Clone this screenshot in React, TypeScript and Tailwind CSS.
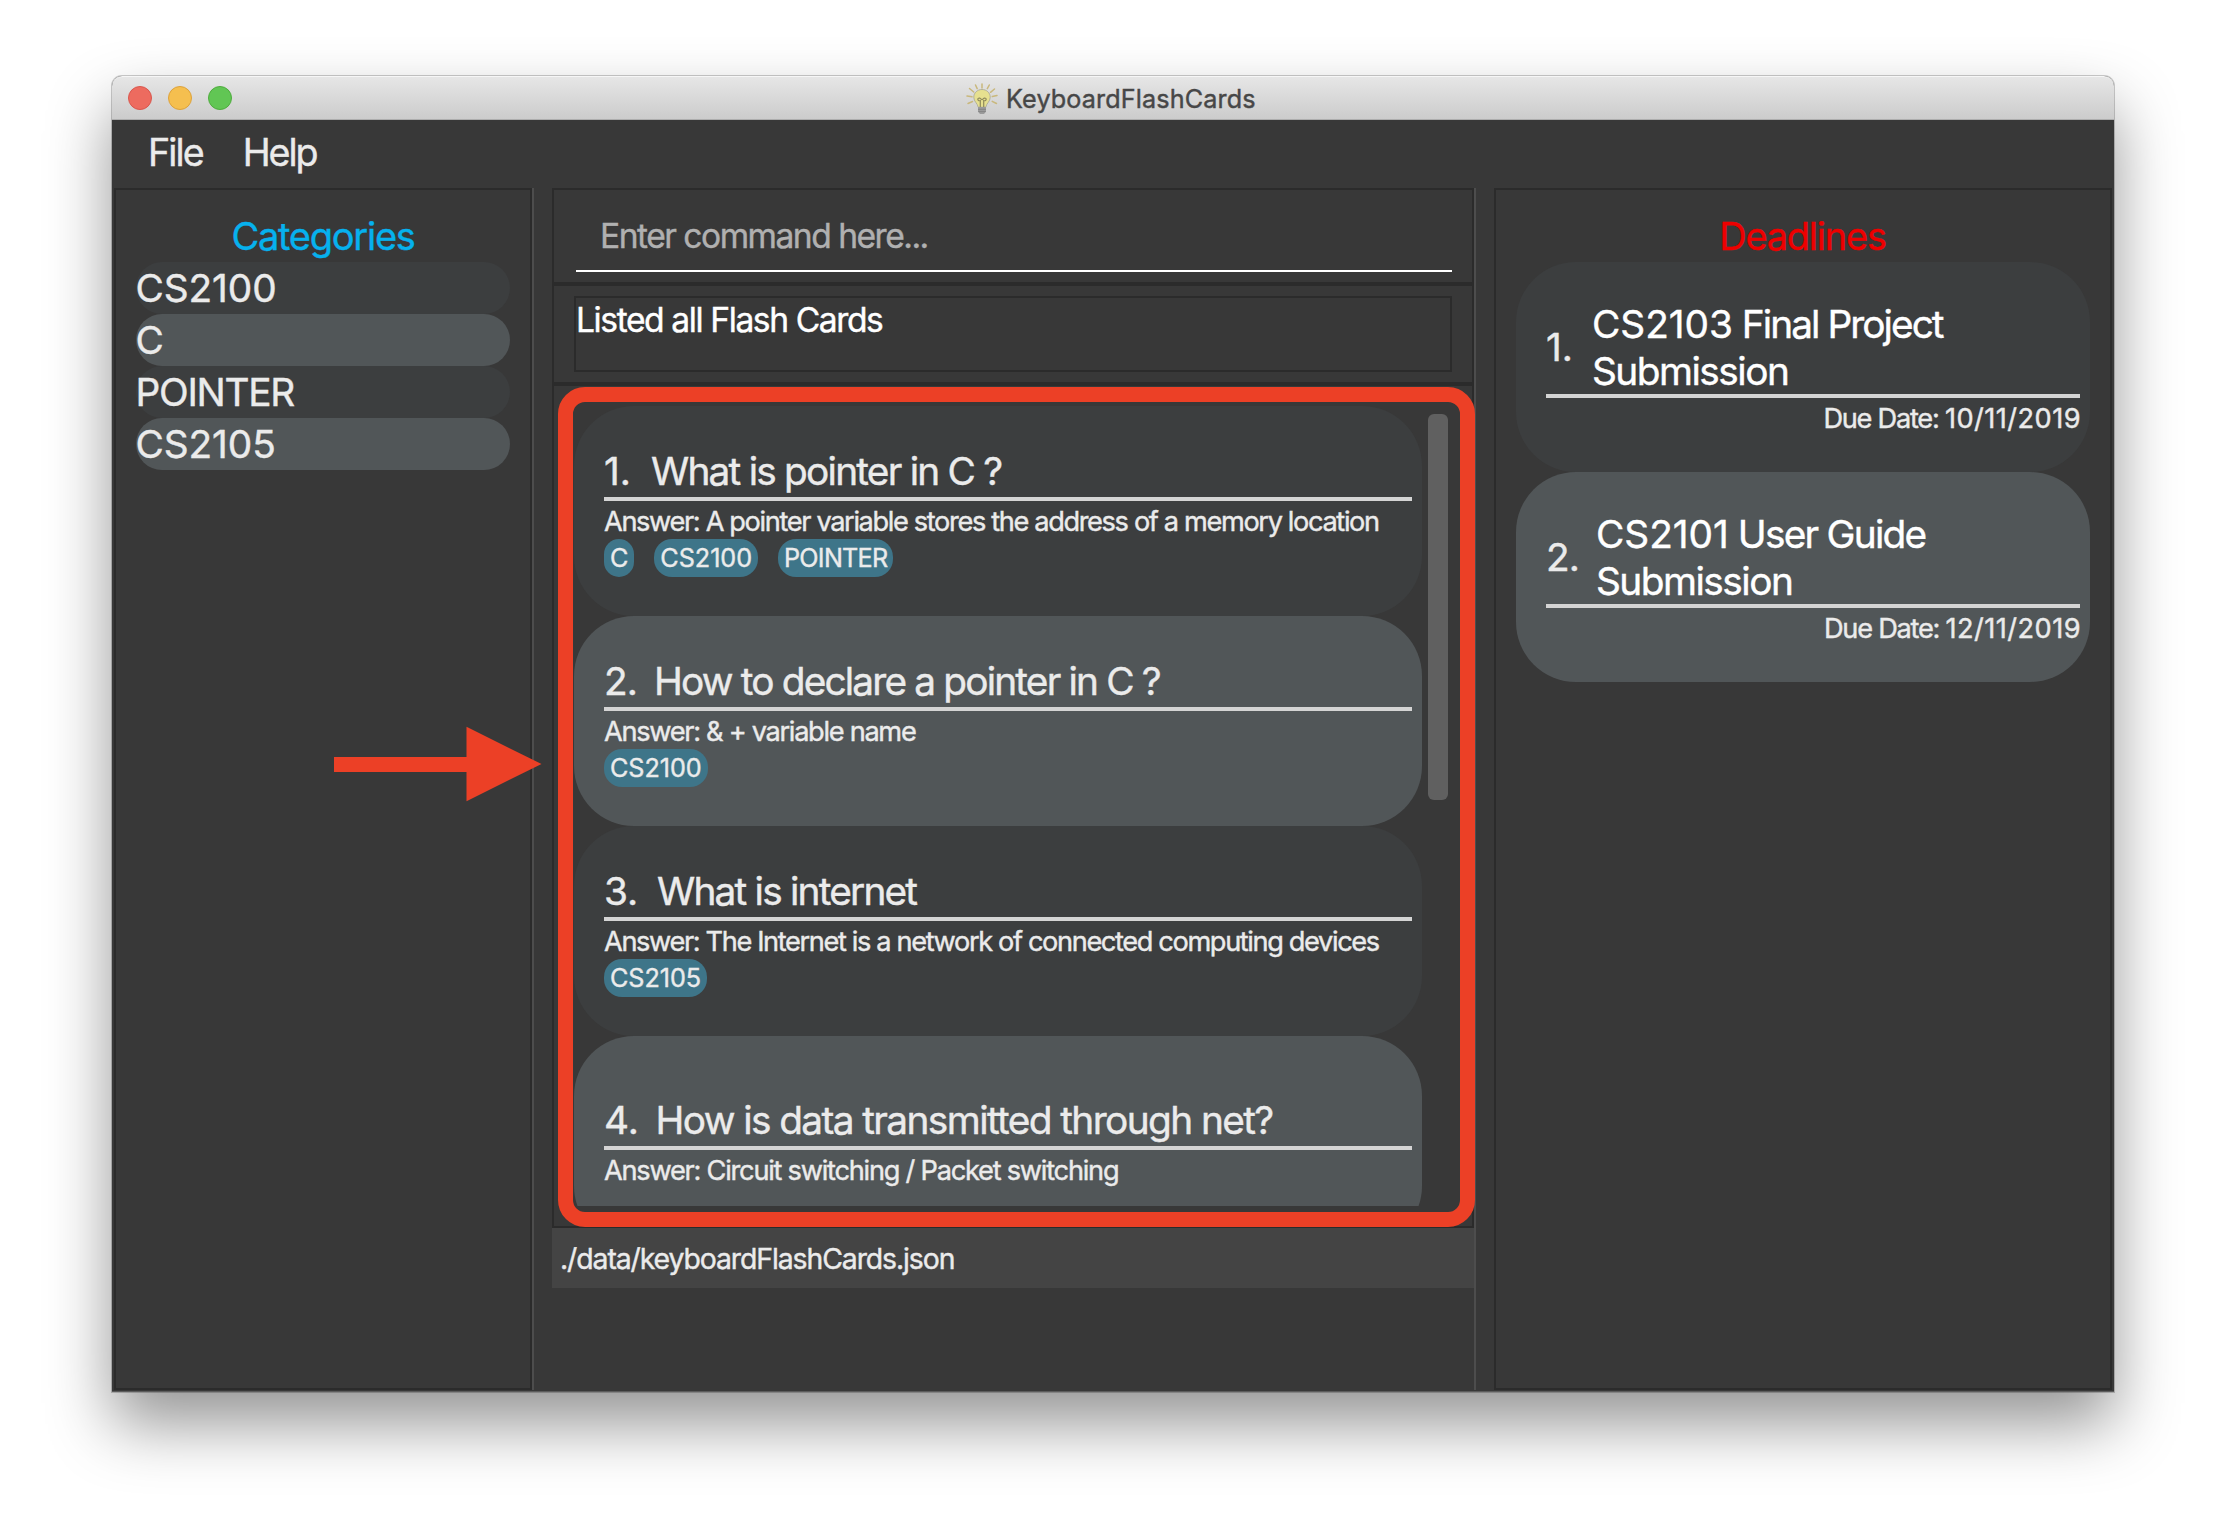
import React from 'react';

type Card = {
  no: string;
  question: string;
  answer: string;
  tags: string[];
  noWidth: string;
  tracking: string;
  answerTracking: string;
  top: string;
};

const categories = ['CS2100', 'C', 'POINTER', 'CS2105'];

const cards: Card[] = [
  {
    no: '1.',
    question: 'What is pointer in C ?',
    answer: 'A pointer variable stores the address of a memory location',
    tags: ['C', 'CS2100', 'POINTER'],
    noWidth: 'w-[47px]',
    tracking: 'tracking-[-1.78px]',
    answerTracking: 'tracking-[-1.36px]',
    top: 'h-[210px] pt-[40px]',
  },
  {
    no: '2.',
    question: 'How to declare a pointer in C ?',
    answer: '& + variable name',
    tags: ['CS2100'],
    noWidth: 'w-[50px] tracking-[-1px]',
    tracking: 'tracking-[-1.83px]',
    answerTracking: 'tracking-[-1.3px]',
    top: 'h-[210px] pt-[40px]',
  },
  {
    no: '3.',
    question: 'What is internet',
    answer: 'The Internet is a network of connected computing devices',
    tags: ['CS2105'],
    noWidth: 'w-[53px]',
    tracking: 'tracking-[-1.8px]',
    answerTracking: 'tracking-[-1.37px]',
    top: 'h-[210px] pt-[40px]',
  },
  {
    no: '4.',
    question: 'How is data transmitted through net?',
    answer: 'Circuit switching / Packet switching',
    tags: [],
    noWidth: 'w-[51.5px]',
    tracking: 'tracking-[-1.6px]',
    answerTracking: 'tracking-[-1.24px]',
    top: 'h-[210px] pt-[59px]',
  },
];

const deadlines = [
  {
    no: '1.',
    code: 'CS2103',
    first: ' Final Project',
    date: '10/11/2019',
    noWidth: 'w-[46px]',
    tracking: 'tracking-[-1.95px]',
  },
  {
    no: '2.',
    code: 'CS2101',
    first: ' User Guide',
    date: '12/11/2019',
    noWidth: 'w-[50px] tracking-[-1px]',
    tracking: 'tracking-[-1.75px]',
  },
];

function stripe(i: number) {
  return i % 2 === 0 ? 'bg-[#3c3e3f]' : 'bg-[#515658]';
}

function BulbIcon() {
  return (
    <svg viewBox="0 0 32 32" className="h-8 w-8" fill="none">
      <g stroke="#c9b87c" strokeWidth="1.5" strokeLinecap="round">
        <path d="M16 1v4M9.5 2l1.7 3.6M23.300 2l-2 3.700M3.500 5.500l4.200 3.500M28.500 6l-4 3.300M1 13l5 .8M31 12.500l-4.700 1M2 20.500l4.500-2M30.500 20.500l-4.300-2.200" />
      </g>
      <path
        d="M16 6.500c-4.700 0-8.200 3.400-8.200 7.700 0 4.600 3.700 5.800 4.400 10h7.600c.7-4.200 4.400-5.400 4.400-10 0-4.300-3.500-7.700-8.200-7.700z"
        fill="#e6e08f"
        stroke="#b3b19b"
        strokeWidth="1"
      />
      <path
        d="M14.300 24v-6.300c-3.200.6-3.200-3.200-.6-2.600 1.300.4 1.500 1.600 2.300 1.600s1-1.200 2.300-1.600c2.600-.6 2.600 3.200-.6 2.600V24"
        stroke="#8f8a5c"
        strokeWidth="1.200"
      />
      <path d="M12 24h8v4.500l-2 2.500h-4l-2-2.500z" fill="#9b9b9b" />
      <path d="M12 26.300h8M12.300 28.600h7.400" stroke="#7f7f7f" strokeWidth=".8" />
    </svg>
  );
}

function TitleBar() {
  return (
    <div className="relative flex h-[44px] items-center rounded-t-[10px] border-t border-b border-t-[#f6f6f6] border-b-[#adadad] bg-linear-to-b from-[#e6e6e6] to-[#cccccc] pl-4">
      <div className="flex gap-4">
        <span className="h-6 w-6 rounded-full border border-[#d9574e] bg-[#ed6b5f]" />
        <span className="h-6 w-6 rounded-full border border-[#dda23c] bg-[#f5bf4f]" />
        <span className="h-6 w-6 rounded-full border border-[#4fac3e] bg-[#61c654]" />
      </div>
      <div className="ml-[734px] flex items-center gap-2 pt-[2px]">
        <BulbIcon />
        <span className="text-[25.2px] leading-[42px] tracking-[0.13px] whitespace-pre text-[#474747]">
          KeyboardFlashCards
        </span>
      </div>
    </div>
  );
}

function MenuBar() {
  return (
    <div className="flex h-[68px] gap-[40px] pl-[36px] text-[37.6px] leading-[66px] text-[#ebebeb]">
      <span className="tracking-[-1.9px]">File</span>
      <span className="tracking-[-2.05px]">Help</span>
    </div>
  );
}

function CategoriesPane() {
  return (
    <div className="h-[1202px] w-[418px] border-2 border-[#2b2b2b] pt-5 pr-5 pl-5">
      <h2 className="text-center text-[38px] leading-[52px] tracking-[-1.25px] text-[#06b1ee]">Categories</h2>
      {categories.map((c, i) => (
        <div
          key={c}
          className={`${stripe(i)} h-[52px] w-[374px] rounded-[26px] text-[38.8px] leading-[52px] text-[#ebebeb]`}
        >
          <span className={c === 'POINTER' ? '-ml-[0.5px] tracking-[-1.28px]' : '-ml-[0.5px] tracking-[-0.1px]'}>{c}</span>
        </div>
      ))}
    </div>
  );
}

function FlashCard({ card, index }: { card: Card; index: number }) {
  return (
    <div className={`${stripe(index)} ${card.top} w-[848px] shrink-0 rounded-[60px] pr-[10px] pl-[30px] text-[#ebebeb]`}>
      <div className="flex h-[51px] text-[38.8px] leading-[50px] whitespace-pre">
        <span className={card.noWidth}>{card.no}</span>
        <span className={card.tracking}>{card.question}</span>
      </div>
      <div className="h-1 bg-[#d4d4d4]" />
      <div className={`${card.answerTracking} h-[38px] text-[27.2px] leading-[42px] whitespace-pre`}>
        Answer: {card.answer}
      </div>
      <div className="flex gap-5">
        {card.tags.map((t) => (
          <span
            key={t}
            className={`${t === 'POINTER' ? 'tracking-[-0.75px]' : 'tracking-[-0.05px]'} h-[38px] rounded-[18px] bg-[#3e7589] px-[6px] text-[25.2px] leading-[38px]`}
          >
            {t}
          </span>
        ))}
      </div>
    </div>
  );
}

function MainPane() {
  return (
    <div className="w-[922px]">
      <div className="h-[96px] border-2 border-[#2b2b2b] pt-[11px] pr-5 pl-[22px]">
        <div className="h-[71px] border-b-2 border-white pl-[24px] text-[33.6px] leading-[69px] tracking-[-1.5px] text-[#b0b0b0]">
          Enter command here...
        </div>
      </div>
      <div className="h-[100px] border-2 border-[#2b2b2b] px-5 pt-[10px]">
        <div className="h-[76px] border-2 border-[#2b2b2b] text-[33.6px] leading-[44px] tracking-[-1.4px] text-white">
          Listed all Flash Cards
        </div>
      </div>
      <div className="flex h-[844px] gap-[6px] border-2 border-[#2b2b2b] pt-5 pl-5">
        <div className="flex h-[800px] flex-col overflow-hidden">
          {cards.map((c, i) => (
            <FlashCard key={c.no} card={c} index={i} />
          ))}
        </div>
        <div className="mt-2 h-[386px] w-5 rounded-[6px] bg-[#606060]" />
      </div>
      <div className="h-[60px] bg-[#444444] pl-2 text-[28.4px] leading-[62px] tracking-[-1.09px] text-[#ebebeb]">
        ./data/keyboardFlashCards.json
      </div>
    </div>
  );
}

function DeadlinesPane() {
  return (
    <div className="h-[1202px] w-[618px] border-2 border-[#2b2b2b] px-5 pt-5">
      <h2 className="pr-px text-center text-[38px] leading-[52px] tracking-[-1.25px] text-[#ee0000]">Deadlines</h2>
      {deadlines.map((d, i) => (
        <div key={d.no} className={`${stripe(i)} h-[210px] w-[574px] rounded-[60px] pt-[38px] pr-[10px] pl-[30px]`}>
          <div className="flex h-[94px] items-center text-[38.8px] leading-[47px]">
            <span className={`${d.noWidth} pb-[2px] text-[#ebebeb]`}>{d.no}</span>
            <div className={`${d.tracking} whitespace-pre text-white`}>
              <div>
                <span className="tracking-[-0.05px]">{d.code}</span>
                {d.first}
              </div>
              <div className="tracking-[-1.52px]">Submission</div>
            </div>
          </div>
          <div className="h-1 bg-[#d4d4d4]" />
          <div className="-mr-px text-right text-[27.2px] leading-[42px] tracking-[-1.25px] whitespace-pre text-[#ebebeb]">
            Due Date: <span className="tracking-[0.45px]">{d.date}</span>
          </div>
        </div>
      ))}
    </div>
  );
}

export default function App() {
  return (
    <div className="relative h-[1540px] w-[2226px] overflow-hidden bg-white pt-[76px] pl-[112px] font-['Inter',sans-serif] [-webkit-text-stroke:0.4px]">
      <div className="h-[1316px] w-[2002px] rounded-t-[10px] bg-[#383838] shadow-[0_0_0_1px_rgba(0,0,0,0.2),0_32px_64px_rgba(0,0,0,0.42)]">
        <TitleBar />
        <MenuBar />
        <div className="flex h-[1202px] pl-[2px]">
          <CategoriesPane />
          <div className="mr-[18px] w-[2px] bg-[#4d4d4d]" />
          <MainPane />
          <div className="mr-[18px] w-[2px] bg-[#4d4d4d]" />
          <DeadlinesPane />
        </div>
        <div className="mt-px h-px bg-[#5c5c5c]" />
      </div>

      {/* Callout: frame around the flash card list and the arrow that points at it */}
      <div className="absolute top-[387px] left-[558px] h-[840px] w-[917px] rounded-[27px] border-[15px] border-[#ec4026]" />
      <svg className="absolute top-[726px] left-[334px]" width="208" height="76" viewBox="0 0 208 76">
        <path d="M0 31h132.500V.8L207.500 38l-75 37.200V46H0z" fill="#ec4026" />
      </svg>
    </div>
  );
}
